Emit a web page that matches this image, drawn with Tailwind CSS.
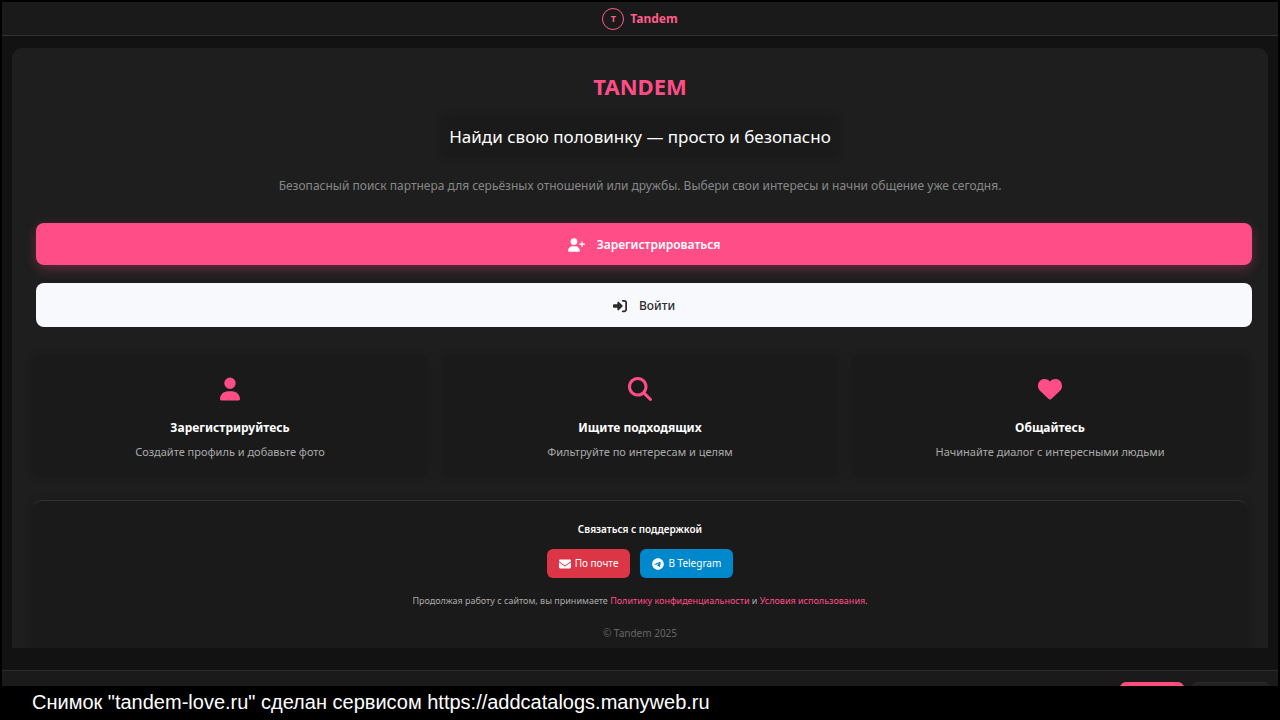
<!DOCTYPE html>
<html lang="ru">
<head>
    <meta charset="UTF-8">
    <meta name="viewport" content="width=device-width, initial-scale=1.0">
    <title>Tandem</title>
    <script src="https://cdn.jsdelivr.net/npm/@tailwindcss/browser@4"></script>
</head>
<body class="flex h-screen flex-col overflow-hidden bg-black font-['Noto_Sans',sans-serif] text-white">
    <div class="mx-[2px] mt-[2px] flex min-h-0 flex-1 flex-col bg-[#121212]">
        <!-- Top bar -->
        <header class="flex h-[34px] shrink-0 items-center justify-center gap-1.5 border-b border-[#333] bg-[#1a1a1a] text-[#ff5c8a]">
            <span class="flex size-[22px] items-center justify-center rounded-full border border-current text-[9px] leading-none font-bold">T</span>
            <span class="text-[12px] leading-5 font-bold">Tandem</span>
        </header>

        <main class="flex min-h-0 flex-1 flex-col px-[10px] pt-3 pb-[22px]">
            <div class="min-h-0 flex-1 overflow-hidden rounded-t-[10px] bg-[#1e1e1e] px-5 pt-[22px] text-center">
                <h1 class="text-[22px] leading-8 font-bold text-[#ff4d88]">TANDEM</h1>
                <p class="mx-auto mt-3.5 w-fit rounded-lg bg-[#1a1a1a] px-2 text-[17px] leading-[42px] shadow-[0_0_6px_#1a1a1a]">Найди свою половинку — просто и безопасно</p>
                <p class="mt-4 text-[12px] leading-6 text-[#888]">Безопасный поиск партнера для серьёзных отношений или дружбы. Выбери свои интересы и начни общение уже сегодня.</p>

                <div class="mt-[25px] -mr-1 ml-1 flex flex-col gap-[18px]">
                    <button type="button" class="flex h-[42px] items-center justify-center gap-3 rounded-lg bg-[#ff4d88] pt-0.5 text-[12px] font-semibold shadow-[0_4px_12px_rgba(255,77,136,0.3)]">
                        <svg class="h-[14px] w-[17px]" viewBox="0 0 640 512" fill="currentColor"><path d="M96 128a128 128 0 1 1 256 0A128 128 0 1 1 96 128zM0 482.3C0 383.8 79.8 304 178.3 304h91.4C368.2 304 448 383.8 448 482.3c0 16.4-13.3 29.7-29.7 29.7H29.7C13.3 512 0 498.7 0 482.3zM504 312V248H440c-13.3 0-24-10.7-24-24s10.7-24 24-24h64V136c0-13.3 10.7-24 24-24s24 10.7 24 24v64h64c13.3 0 24 10.7 24 24s-10.7 24-24 24H552v64c0 13.3-10.7 24-24 24s-24-10.7-24-24z" /></svg>
                        Зарегистрироваться
                    </button>
                    <button type="button" class="flex h-11 items-center justify-center gap-3 rounded-lg bg-[#f8f9fc] pt-0.5 text-[12px] font-medium text-[#2b2b2b]">
                        <svg class="size-[14px]" viewBox="0 0 512 512" fill="currentColor"><path d="M217.9 105.9L340.7 228.7c7.2 7.2 11.3 17.1 11.3 27.3s-4.1 20.1-11.3 27.3L217.9 406.1c-6.4 6.4-15 9.9-24 9.9c-18.7 0-33.9-15.2-33.9-33.9V320H32c-17.7 0-32-14.3-32-32v-64c0-17.7 14.3-32 32-32h128v-62.1c0-18.7 15.2-33.9 33.9-33.9c9 0 17.6 3.6 24 9.9zM352 416h64c17.7 0 32-14.3 32-32V128c0-17.7-14.3-32-32-32h-64c-17.7 0-32-14.3-32-32s14.3-32 32-32h64c53 0 96 43 96 96v256c0 53-43 96-96 96h-64c-17.7 0-32-14.3-32-32s14.3-32 32-32z" /></svg>
                        Войти
                    </button>
                </div>

                <!-- Steps -->
                <section class="mt-[27px] grid grid-cols-3 gap-3.5">
                    <div class="rounded-[10px] bg-[#1a1a1a] pt-[23px] pb-4 shadow-[0_0_6px_#1a1a1a]">
                        <svg class="mx-auto h-6 w-5 text-[#ff4d88]" viewBox="0 0 448 512" fill="currentColor"><path d="M224 256A128 128 0 1 0 224 0a128 128 0 1 0 0 256zm-45.7 48C79.8 304 0 383.8 0 482.3C0 498.7 13.3 512 29.7 512H418.3c16.4 0 29.7-13.3 29.7-29.7C448 383.8 368.2 304 269.7 304H178.3z" /></svg>
                        <h2 class="mt-[15px] text-[12px] leading-6 font-bold">Зарегистрируйтесь</h2>
                        <p class="mt-0.5 text-[11px] leading-5 text-[#aaa]">Создайте профиль и добавьте фото</p>
                    </div>
                    <div class="rounded-[10px] bg-[#1a1a1a] pt-[23px] pb-4 shadow-[0_0_6px_#1a1a1a]">
                        <svg class="mx-auto size-6 text-[#ff4d88]" viewBox="0 0 512 512" fill="currentColor"><path d="M416 208c0 45.900-14.900 88.300-40 122.700L502.600 457.400c12.500 12.500 12.500 32.800 0 45.300s-32.800 12.500-45.300 0L330.700 376c-34.400 25.200-76.800 40-122.700 40C93.100 416 0 322.900 0 208S93.100 0 208 0S416 93.100 416 208zM208 352a144 144 0 1 0 0-288 144 144 0 1 0 0 288z" /></svg>
                        <h2 class="mt-[15px] text-[12px] leading-6 font-bold">Ищите подходящих</h2>
                        <p class="mt-0.5 text-[11px] leading-5 text-[#aaa]">Фильтруйте по интересам и целям</p>
                    </div>
                    <div class="rounded-[10px] bg-[#1a1a1a] pt-[23px] pb-4 shadow-[0_0_6px_#1a1a1a]">
                        <svg class="mx-auto size-6 text-[#ff4d88]" viewBox="0 0 512 512" fill="currentColor"><path d="M47.600 300.400L228.300 469.100c7.500 7 17.400 10.900 27.700 10.900s20.200-3.900 27.700-10.900L464.400 300.400c30.400-28.300 47.600-68 47.600-109.500v-5.800c0-69.900-50.500-129.500-119.400-141C347 36.500 300.600 51.400 268 84L256 96 244 84c-32.600-32.600-79-47.500-124.600-39.900C50.500 55.600 0 115.200 0 185.100v5.800c0 41.500 17.200 81.200 47.600 109.500z" /></svg>
                        <h2 class="mt-[15px] text-[12px] leading-6 font-bold">Общайтесь</h2>
                        <p class="mt-0.5 text-[11px] leading-5 text-[#aaa]">Начинайте диалог с интересными людьми</p>
                    </div>
                </section>

                <!-- Support and legal -->
                <footer class="mt-[22px] rounded-[10px] border-t border-[#333] bg-[#1a1a1a] pt-[18px] pb-5 shadow-[0_0_6px_#1a1a1a]">
                    <h3 class="text-[10px] leading-5 font-semibold">Связаться с поддержкой</h3>
                    <div class="mt-2.5 flex justify-center gap-2.5 text-[10px]">
                        <a href="#" class="flex h-[29px] items-center gap-1 rounded-md bg-[#dc3545] px-3">
                            <svg class="size-3" viewBox="0 0 512 512" fill="currentColor"><path d="M48 64C21.500 64 0 85.500 0 112c0 15.100 7.100 29.300 19.200 38.400L236.800 313.600c11.400 8.500 27 8.500 38.400 0L492.800 150.400c12.100-9.100 19.200-23.300 19.200-38.400c0-26.500-21.500-48-48-48H48zM0 176V384c0 35.300 28.700 64 64 64H448c35.300 0 64-28.700 64-64V176L294.400 339.200c-22.800 17.100-54 17.100-76.800 0L0 176z" /></svg>
                            По почте
                        </a>
                        <a href="#" class="flex h-[29px] items-center gap-1 rounded-md bg-[#0088cc] px-3">
                            <svg class="size-3" viewBox="0 0 496 512" fill="currentColor"><path d="M248,8C111.033,8,0,119.033,0,256S111.033,504,248,504,496,392.967,496,256,384.967,8,248,8ZM362.952,176.660c-3.732,39.215-19.881,134.378-28.100,178.300-3.476,18.584-10.322,24.816-16.948,25.425-14.400,1.326-25.338-9.517-39.287-18.661-21.827-14.308-34.158-23.215-55.346-37.177-24.485-16.135-8.612-25,5.342-39.500,3.652-3.793,67.107-61.510,68.335-66.746.153-.655.300-3.100-1.154-4.384s-3.590-.849-5.135-.500q-3.283.746-104.608,69.142-14.845,10.194-26.894,9.934c-8.855-.191-25.888-5.006-38.551-9.123-15.531-5.048-27.875-7.717-26.800-16.291q.840-6.700,18.450-13.700,108.446-47.248,144.628-62.300c68.872-28.647,83.183-33.623,92.511-33.789,2.052-.034,6.639.474,9.610,2.885a10.452,10.452,0,0,1,3.530,6.716A43.765,43.765,0,0,1,362.952,176.660Z" /></svg>
                            В Telegram
                        </a>
                    </div>
                    <p class="mt-[13px] text-[9px] leading-5 text-[#aaa]">Продолжая работу с сайтом, вы принимаете <a href="#" class="text-[#ff4d88]">Политику конфиденциальности</a> и <a href="#" class="text-[#ff4d88]">Условия использования</a>.</p>
                    <p class="mt-3 text-[10px] leading-5 text-[#666]">© Tandem 2025</p>
                </footer>
            </div>
        </main>

        <!-- Bottom bar, cut off by the caption -->
        <div class="flex h-4 shrink-0 items-start justify-end gap-2 overflow-hidden border-t border-[#2c2c2c] bg-[#1a1a1a] px-2 pt-[11px]">
            <button type="button" aria-label="Принять" class="h-7 w-16 shrink-0 rounded-md bg-[#ff4d7d]"></button>
            <button type="button" aria-label="Отклонить" class="h-7 w-[78px] shrink-0 rounded-md border border-[#2c2c2c] bg-[#222]"></button>
        </div>
    </div>

    <p class="h-[34px] shrink-0 px-8 font-['Liberation_Sans',sans-serif] text-[20px] leading-8">Снимок "tandem-love.ru" сделан сервисом https://addcatalogs.manyweb.ru</p>
</body>
</html>
